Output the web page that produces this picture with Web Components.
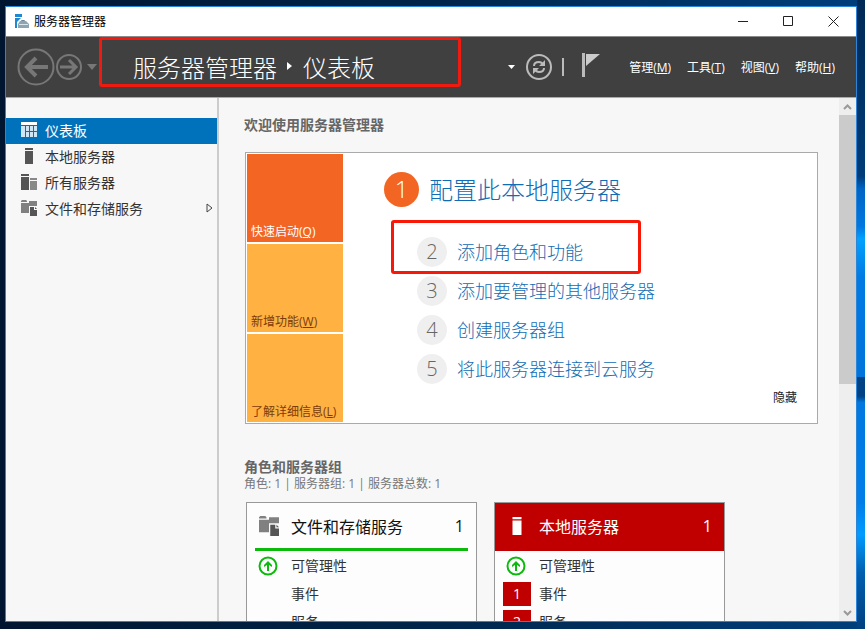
<!DOCTYPE html>
<html lang="zh-CN">
<head>
<meta charset="utf-8">
<title>服务器管理器</title>
<style>
    html, body {
        height: 100%;
        margin: 0;
    }

    body {
        box-sizing: border-box;
        padding: 6px 8px 7px 5px;
        overflow: hidden;
        font-family: "Open Sans", "Noto Sans CJK SC", sans-serif;
        font-size: 14px;
        color: #333;
        background:
            linear-gradient(#002a55 0, #003c78 28%, #0064c4 30%, #0078e0 36%, #00a2ff 38%, #007ae4 44%, #0074da 60%, #004384 60%, #004384 63%, #0078e0 64%, #007ee8 80%, #009cff 85%, #0060b0 91%, #004080 100%) right / 8px 100% no-repeat,
            linear-gradient(90deg, #001630, #00254a 50%, #003f7c);
    }
</style>
</head>
<body>
<app-window>
    <title-bar slot="title">服务器管理器</title-bar>
    <app-header slot="header">
        <span slot="app">服务器管理器</span>
        <span slot="page">仪表板</span>
        <menu-item key="M">管理</menu-item>
        <menu-item key="T">工具</menu-item>
        <menu-item key="V">视图</menu-item>
        <menu-item key="H">帮助</menu-item>
    </app-header>
    <side-nav slot="nav">
        <nav-item icon="dashboard" active>仪表板</nav-item>
        <nav-item icon="server">本地服务器</nav-item>
        <nav-item icon="servers">所有服务器</nav-item>
        <nav-item icon="storage" expandable>文件和存储服务</nav-item>
    </side-nav>
    <page-section heading="欢迎使用服务器管理器">
        <welcome-panel>
            <welcome-tile slot="tile" key="Q" active>快速启动</welcome-tile>
            <welcome-tile slot="tile" key="W">新增功能</welcome-tile>
            <welcome-tile slot="tile" key="L">了解详细信息</welcome-tile>
            <step-link number="1" primary>配置此本地服务器</step-link>
            <step-link number="2" marked>添加角色和功能</step-link>
            <step-link number="3">添加要管理的其他服务器</step-link>
            <step-link number="4">创建服务器组</step-link>
            <step-link number="5">将此服务器连接到云服务</step-link>
        </welcome-panel>
    </page-section>
    <page-section heading="角色和服务器组" summary="角色: 1 | 服务器组: 1 | 服务器总数: 1">
        <card-grid>
            <role-card icon="storage" heading="文件和存储服务" count="1">
                <status-row ok>可管理性</status-row>
                <status-row>事件</status-row>
                <status-row>服务</status-row>
            </role-card>
            <role-card icon="server" heading="本地服务器" count="1" alert>
                <status-row ok>可管理性</status-row>
                <status-row count="1">事件</status-row>
                <status-row count="2">服务</status-row>
            </role-card>
        </card-grid>
    </page-section>
</app-window>

<script>
const ICONS = {
    dashboard: `<path fill="#fff" d="M0 0h16v3H0z"/><path fill="#cfe6f7" d="M0 4h4v11H0zM5 4h3v5H5zM9 4h3v5H9zM13 4h3v5h-3zM5 10h3v5H5zM9 10h3v5H9zM13 10h3v5h-3z"/>`,
    server: `<path fill="currentColor" d="M4 0h8v2H4zM4 3h8v13H4z"/>`,
    servers: `<path fill="#555" d="M0 0h8v2H0zM0 3h8v13H0z"/><path fill="#888" d="M9 4h7v2H9zM9 7h7v9H9z"/>`,
    storage: `<path fill="#808080" d="M0 1l1-1h4l1 1v1H0zM0 3h8V1h8v5H8v7H0z"/><path fill="#f8f8f8" d="M8 6h8v10H8z"/><path fill="#555" d="M9 7h4v3h3v6H9zM14 7l2 2h-2z"/>`
};

function svgIcon(name, size) {
    return `<svg width="${size}" height="${size}" viewBox="0 0 16 16" aria-hidden="true">${ICONS[name]}</svg>`;
}

class BaseElement extends HTMLElement {
    constructor() {
        super();
        this.attachShadow({ mode: 'open' });
    }

    connectedCallback() {
        this.shadowRoot.innerHTML = this.render();
    }

    attr(name) {
        return this.getAttribute(name) || '';
    }
}

class AppWindow extends BaseElement {
    render() {
        return `
        <style>
            :host {
                display: flex;
                flex-direction: column;
                box-sizing: border-box;
                height: 100%;
                border: 1px solid #2b86d9;
                background: #f7f7f7;
            }

            .body {
                flex: 1;
                display: flex;
                min-height: 0;
            }

            main {
                flex: 1;
                min-width: 0;
                overflow: hidden;
                padding: 18px 21px 0 25px;
            }
        </style>
        <slot name="title"></slot>
        <slot name="header"></slot>
        <div class="body">
            <slot name="nav"></slot>
            <main><slot></slot></main>
            <scroll-track></scroll-track>
        </div>
        `;
    }
}

class TitleBar extends BaseElement {
    render() {
        return `
        <style>
            :host {
                display: flex;
                align-items: center;
                height: 29px;
                padding-left: 8px;
                background: #fff;
                border-bottom: 1px solid #8a8a8a;
                color: #000;
                font-size: 12px;
            }

            .name {
                flex: 1;
                margin-left: 5px;
                padding-bottom: 2px;
            }

            button {
                width: 45px;
                height: 29px;
                padding: 0;
                border: 0;
                background: none;
            }

            button svg {
                display: block;
                margin: auto;
            }
        </style>
        <svg width="15" height="15" viewBox="0 0 15 15" aria-hidden="true">
            <path fill="#1e88d2" d="M1 0h7v3H1zM1 4h6L3 8v6H1z"/>
            <path fill="none" stroke="#6d8796" d="M7.500 8V6.500h3V8"/>
            <path fill="#8da5b2" d="M4 10l2-3h6l3 3v4H4z"/>
            <path fill="#dbe5ea" d="M5 10h9v1H5z"/>
        </svg>
        <span class="name"><slot></slot></span>
        <button aria-label="最小化"><svg width="11" height="11" viewBox="0 0 11 11"><path stroke="#222" d="M0 5.500h10"/></svg></button>
        <button aria-label="最大化"><svg width="11" height="11" viewBox="0 0 11 11"><path fill="none" stroke="#222" d="M.5.5h9v9h-9z"/></svg></button>
        <button aria-label="关闭"><svg width="11" height="11" viewBox="0 0 11 11"><path stroke="#222" d="M.5.5l10 10M10.500.5l-10 10"/></svg></button>
        `;
    }
}

class AppHeader extends BaseElement {
    render() {
        return `
        <style>
            :host {
                display: flex;
                align-items: center;
                height: 60px;
                padding: 0 21px 0 11px;
                background: #404040;
                border-bottom: 1px solid #aaa;
                color: #fff;
            }

            button {
                padding: 0;
                border: 0;
                background: none;
                color: inherit;
                line-height: 0;
            }

            .history { margin-left: 4px; }

            .crumbs {
                position: relative;
                display: flex;
                align-items: center;
                gap: 10px;
                flex: 1;
                margin-left: 36px;
                padding-bottom: 2px;
                font-size: 24px;
                font-weight: 300;
                white-space: nowrap;
            }

            .mark {
                position: absolute;
                left: -34px;
                top: 50%;
                width: 356px;
                height: 44px;
                margin-top: -30px;
                border: 3px solid #f01b10;
                border-radius: 3px;
            }

            .tools {
                display: flex;
                align-items: center;
                gap: 10px;
                margin-right: 29px;
            }

            .rule {
                width: 2px;
                height: 18px;
                background: #bbb;
            }

            .flag {
                margin: 0 0 4px 8px;
            }

            nav {
                display: flex;
                gap: 16px;
                padding-bottom: 2px;
            }
        </style>
        <button aria-label="后退">
            <svg width="38" height="38" viewBox="0 0 38 38"><circle cx="19" cy="19" r="17.500" fill="none" stroke="#777" stroke-width="2"/><path fill="none" stroke="#777" stroke-width="4" d="M31 19H10M19 10l-9 9 9 9"/></svg>
        </button>
        <button aria-label="前进">
            <svg width="28" height="28" viewBox="0 0 28 28"><circle cx="14" cy="14" r="12" fill="none" stroke="#777" stroke-width="2"/><path fill="none" stroke="#777" stroke-width="3" d="M5 14h15M14 7l7 7-7 7"/></svg>
        </button>
        <button class="history" aria-label="历史记录">
            <svg width="10" height="6" viewBox="0 0 10 6"><path fill="#777" d="M0 0h10L5 6z"/></svg>
        </button>
        <div class="crumbs">
            <slot name="app"></slot>
            <svg width="6" height="8" viewBox="0 0 6 8"><path fill="#fff" d="M0 0l5 4-5 4z"/></svg>
            <slot name="page"></slot>
            <div class="mark"></div>
        </div>
        <div class="tools">
            <button aria-label="更多"><svg width="8" height="4" viewBox="0 0 8 4"><path fill="#fff" d="M0 0h7L3.500 4z"/></svg></button>
            <button aria-label="刷新">
                <svg width="26" height="26" viewBox="0 0 26 26">
                    <circle cx="13" cy="13" r="12" fill="none" stroke="#bbb" stroke-width="2"/>
                    <path fill="none" stroke="#bbb" stroke-width="2" d="M8 12c0-3 2-4 5-4 2 0 3 1 4 2M18 14c0 3-2 4-5 4-2 0-3-1-4-2"/>
                    <path fill="#bbb" d="M19 6v6h-6zM7 20v-6h6z"/>
                </svg>
            </button>
            <div class="rule"></div>
            <button class="flag" aria-label="通知"><svg width="18" height="24" viewBox="0 0 18 24"><path fill="#bbb" d="M0 0h3v24H0z"/><path fill="#ccc" d="M4 1h14L4 13z"/></svg></button>
        </div>
        <nav><slot></slot></nav>
        `;
    }
}

class MenuItem extends BaseElement {
    render() {
        return `
        <style>
            :host { display: block; }

            button {
                padding: 0;
                border: 0;
                background: none;
                color: #fff;
                font: inherit;
                font-size: 12px;
                white-space: nowrap;
            }
        </style>
        <button><slot></slot>(<u>${this.attr('key')}</u>)</button>
        `;
    }
}

class SideNav extends BaseElement {
    render() {
        return `
        <style>
            :host {
                display: block;
                flex: none;
                width: 211px;
                padding-top: 20px;
                border-right: 2px solid #ccc;
            }
        </style>
        <nav><slot></slot></nav>
        `;
    }
}

class NavItem extends BaseElement {
    render() {
        return `
        <style>
            :host { display: block; }

            a {
                display: flex;
                align-items: center;
                gap: 8px;
                height: 24px;
                padding: 0 3px 2px 15px;
                color: #333;
                text-decoration: none;
            }

            span { flex: 1; }

            .icon { color: #555; }

            svg { display: block; }

            :host([active]) a {
                background: #0072bc;
                color: #fff;
            }
        </style>
        <a href="#">
            <div class="icon">${svgIcon(this.attr('icon'), 16)}</div>
            <span><slot></slot></span>
            ${this.hasAttribute('expandable') ? '<svg width="8" height="10" viewBox="0 0 8 10"><path fill="none" stroke="#444" d="M1 1l5 4-5 4z"/></svg>' : ''}
        </a>
        `;
    }
}

class ScrollTrack extends BaseElement {
    render() {
        return `
        <style>
            :host {
                display: flex;
                flex-direction: column;
                flex: none;
                width: 17px;
                background: #eee;
            }

            button {
                height: 17px;
                padding: 0;
                border: 0;
                background: none;
                line-height: 0;
            }

            .track { flex: 1; }

            .thumb {
                height: 55%;
                background: #cbcbcb;
            }
        </style>
        <button aria-label="向上滚动"><svg width="9" height="6" viewBox="0 0 9 6"><path fill="none" stroke="#999" stroke-width="2" d="M1 5l3.500-3.500L8 5"/></svg></button>
        <div class="track"><div class="thumb"></div></div>
        <button aria-label="向下滚动"><svg width="9" height="6" viewBox="0 0 9 6"><path fill="none" stroke="#999" stroke-width="2" d="M1 1l3.500 3.500L8 1"/></svg></button>
        `;
    }
}

class PageSection extends BaseElement {
    render() {
        const summary = this.attr('summary');
        return `
        <style>
            :host {
                display: block;
                margin-bottom: 34px;
            }

            h2 {
                margin: 0;
                font-size: 14px;
                line-height: 18px;
                color: #666;
            }

            p {
                margin: 0;
                font-size: 12px;
                line-height: 16px;
                color: #777;
            }

            .content { margin-top: ${summary ? 10 : 18}px; }
        </style>
        <h2>${this.attr('heading')}</h2>
        ${summary ? `<p>${summary}</p>` : ''}
        <div class="content"><slot></slot></div>
        `;
    }
}

class WelcomePanel extends BaseElement {
    render() {
        return `
        <style>
            :host {
                display: flex;
                margin-left: 1px;
                padding: 1px;
                border: 1px solid #aaa;
                background: #fff;
            }

            .tiles {
                display: grid;
                grid-auto-rows: 1fr;
                gap: 2px;
                width: 96px;
            }

            .steps {
                flex: 1;
                display: flex;
                flex-direction: column;
                align-items: flex-start;
                gap: 9px;
                padding: 18px 0 0 41px;
            }

            .hide {
                align-self: flex-end;
                padding: 0;
                margin: 0 19px 16px 0;
                border: 0;
                background: none;
                color: #222;
                font: inherit;
                font-size: 12px;
            }
        </style>
        <div class="tiles"><slot name="tile"></slot></div>
        <div class="steps"><slot></slot></div>
        <button class="hide">隐藏</button>
        `;
    }
}

class WelcomeTile extends BaseElement {
    render() {
        return `
        <style>
            :host { display: block; }

            button {
                display: flex;
                align-items: flex-end;
                width: 100%;
                height: 88px;
                padding: 0 0 2px 4px;
                border: 0;
                background: #ffb142;
                color: #7a3c0a;
                font: inherit;
                font-size: 12px;
                white-space: nowrap;
            }

            :host([active]) button {
                background: #f26522;
                color: #fff;
            }
        </style>
        <button><span><slot></slot>(<u>${this.attr('key')}</u>)</span></button>
        `;
    }
}

class StepLink extends BaseElement {
    render() {
        return `
        <style>
            :host {
                display: block;
                position: relative;
                margin-left: 33px;
            }

            a {
                display: flex;
                align-items: center;
                gap: 10px;
                color: #106cb4;
                font-size: 18px;
                font-weight: 300;
                line-height: 30px;
                text-decoration: none;
                white-space: nowrap;
            }

            b {
                width: 30px;
                height: 30px;
                border-radius: 50%;
                background: #efefef;
                color: #666;
                font-size: 20px;
                font-weight: 300;
                text-align: center;
            }

            :host([primary]) {
                margin: 0 0 21px;
            }

            :host([primary]) a { font-size: 24px; }

            :host([primary]) b {
                width: 35px;
                height: 35px;
                background: #f26522;
                color: #fff;
                font-size: 24px;
                line-height: 34px;
            }

            .mark {
                position: absolute;
                inset: -17px auto auto -26px;
                width: 244px;
                height: 48px;
                border: 3px solid #f81808;
                border-radius: 3px;
                pointer-events: none;
            }
        </style>
        <a href="#"><b>${this.attr('number')}</b><slot></slot></a>
        ${this.hasAttribute('marked') ? '<div class="mark"></div>' : ''}
        `;
    }
}

class CardGrid extends BaseElement {
    render() {
        return `
        <style>
            :host {
                display: grid;
                grid-template-columns: repeat(auto-fill, 231px);
                gap: 17px;
                padding-left: 2px;
            }
        </style>
        <slot></slot>
        `;
    }
}

class RoleCard extends BaseElement {
    render() {
        return `
        <style>
            :host {
                display: block;
                border: 1px solid #999;
                background: #fdfdfd;
            }

            header {
                display: grid;
                grid-template-columns: 28px 1fr auto;
                align-items: center;
                column-gap: 8px;
                height: 45px;
                margin: 0 8px;
                padding-right: 4px;
                border-bottom: 3px solid #0cba0c;
                color: #111;
                font-size: 16px;
            }

            h3 {
                margin: 0;
                font: inherit;
            }

            svg {
                display: block;
                margin: auto;
                color: #fff;
            }

            .rows {
                display: grid;
                gap: 4px;
                padding: 3px 8px;
            }

            :host([alert]) header {
                margin: 0;
                padding: 0 12px 0 8px;
                background: #c00000;
                border-color: #c00000;
                color: #fff;
            }
        </style>
        <header>
            ${svgIcon(this.attr('icon'), this.hasAttribute('alert') ? 18 : 20)}
            <h3>${this.attr('heading')}</h3>
            <span>${this.attr('count')}</span>
        </header>
        <div class="rows"><slot></slot></div>
        `;
    }
}

class StatusRow extends BaseElement {
    render() {
        const count = this.attr('count');
        const mark = this.hasAttribute('ok')
            ? '<svg width="20" height="20" viewBox="0 0 20 20"><circle cx="10" cy="10" r="8.500" fill="none" stroke="#0cba0c" stroke-width="2"/><path fill="#0cba0c" d="M10 5l4 4v2l-3-2v6H9V9l-3 2V9z"/></svg>'
            : count;
        return `
        <style>
            :host { display: block; }

            a {
                display: grid;
                grid-template-columns: 28px 1fr;
                gap: 8px;
                line-height: 24px;
                color: #333;
                text-decoration: none;
            }

            .state {
                height: 24px;
                text-align: center;
            }

            .state.count {
                background: #c00000;
                color: #fff;
            }

            svg {
                display: block;
                margin: 2px auto 0 3px;
            }
        </style>
        <a href="#"><span class="state ${count ? 'count' : ''}">${mark}</span><slot></slot></a>
        `;
    }
}

customElements.define('app-window', AppWindow);
customElements.define('title-bar', TitleBar);
customElements.define('app-header', AppHeader);
customElements.define('menu-item', MenuItem);
customElements.define('side-nav', SideNav);
customElements.define('nav-item', NavItem);
customElements.define('scroll-track', ScrollTrack);
customElements.define('page-section', PageSection);
customElements.define('welcome-panel', WelcomePanel);
customElements.define('welcome-tile', WelcomeTile);
customElements.define('step-link', StepLink);
customElements.define('card-grid', CardGrid);
customElements.define('role-card', RoleCard);
customElements.define('status-row', StatusRow);
</script>
</body>
</html>
